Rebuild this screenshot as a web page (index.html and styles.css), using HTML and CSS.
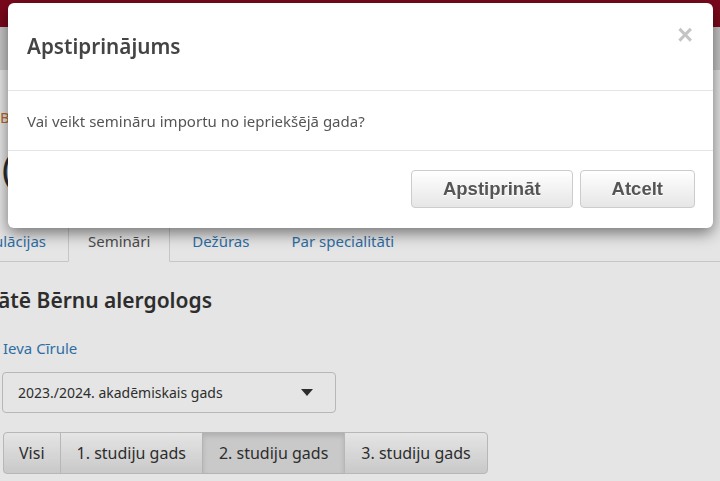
FILE: index.html
```html
<!DOCTYPE html>
<html lang="lv">

<head>
	<meta charset="utf-8">
	<meta name="viewport" content="width=device-width, initial-scale=1">
	<title>Semināri</title>
	<link rel="stylesheet" href="styles.css">
</head>

<body>
	<div class="topbar"></div>
	<div class="navbar"></div>

	<div class="content">
		<div class="breadcrumb">Bērnu alergologs / Semināri</div>
		<h1 class="page-title">(BA) Bērnu alergologs</h1>

		<ul class="tabs">
			<li class="tab tab-cut"><a href="#">Manipulācijas</a></li>
			<li class="tab active"><a href="#">Semināri</a></li>
			<li class="tab"><a href="#">Dežūras</a></li>
			<li class="tab"><a href="#">Par specialitāti</a></li>
		</ul>

		<h2 class="section-title">Rezidentūra specialitātē Bērnu alergologs</h2>

		<div class="form">
			<a class="person" href="#">Ieva Cīrule</a>
			<div class="select">
				<span>2023./2024. akadēmiskais gads</span>
				<span class="caret"></span>
			</div>
			<div class="btn-group">
				<button class="btn">Visi</button>
				<button class="btn">1. studiju gads</button>
				<button class="btn active">2. studiju gads</button>
				<button class="btn">3. studiju gads</button>
			</div>
		</div>
	</div>

	<div class="backdrop"></div>

	<div class="modal">
		<div class="modal-header">
			<h3 class="modal-title">Apstiprinājums</h3>
			<button class="close">×</button>
		</div>
		<div class="modal-body">Vai veikt semināru importu no iepriekšējā gada?</div>
		<div class="modal-footer">
			<button class="dlg-btn">Apstiprināt</button>
			<button class="dlg-btn">Atcelt</button>
		</div>
	</div>
</body>

</html>
```

FILE: styles.css
```css
body {
	background-color: #FFFFFF;
	color: #333333;
	font-family: "Noto Sans", sans-serif;
	font-size: 15px;
	margin: 0;
	overflow: hidden;
}

.topbar {
	background-color: #880B20;
	height: 27px;
}

.navbar {
	background-color: #DDDDDD;
	height: 43px;
}

.content {
	padding: 0 0 0 2px;
}

.breadcrumb {
	color: #D2702F;
	line-height: 20px;
	margin: 37px 0 0 -2px;
}

.page-title {
	font-size: 36px;
	font-weight: 400;
	line-height: 44px;
	margin: 20px 0 0 0;
}

.tabs {
	border-bottom: 1px solid #DDDDDD;
	display: flex;
	list-style: none;
	margin: 29px 0 0 -2px;
	padding: 0;
}

.tab {
	margin-right: 2px;
}

.tab a {
	border: 1px solid transparent;
	border-radius: 4px 4px 0 0;
	color: #337AB7;
	display: block;
	line-height: 20px;
	margin-bottom: -1px;
	padding: 10px 19px;
	text-decoration: none;
	white-space: nowrap;
}

.tab-cut {
	display: flex;
	justify-content: flex-end;
	overflow: hidden;
	width: 66px;
}

.tab.active a {
	background-color: #FFFFFF;
	border-color: #DDDDDD #DDDDDD transparent;
	color: #555555;
}

.section-title {
	display: flex;
	font-size: 21px;
	font-weight: 600;
	justify-content: flex-end;
	line-height: 28px;
	margin: 24px 0 0 -2px;
	overflow: hidden;
	white-space: nowrap;
	width: 212px;
}

.form {
	display: flex;
	flex-direction: column;
	align-items: flex-start;
}

.person {
	color: #337AB7;
	line-height: 20px;
	margin: 24px 0 0 1px;
	text-decoration: none;
}

.select {
	align-items: center;
	border: 1px solid #CCCCCC;
	border-radius: 4px;
	box-sizing: border-box;
	display: flex;
	font-size: 14px;
	height: 41px;
	justify-content: space-between;
	margin-top: 14px;
	padding: 0 22px 0 15px;
	width: 334px;
}

.caret {
	border-left: 6px solid transparent;
	border-right: 6px solid transparent;
	border-top: 7px solid #333333;
	height: 0;
	width: 0;
}

.btn-group {
	display: flex;
	margin: 19px 0 0 1px;
}

.btn {
	background: linear-gradient(#FFFFFF, #E0E0E0);
	border: 1px solid #CCCCCC;
	color: #333333;
	font-family: "Noto Sans", sans-serif;
	font-size: 16px;
	height: 42px;
	margin-left: -1px;
	padding: 0 16px;
}

.btn:first-child {
	border-radius: 4px 0 0 4px;
	margin-left: 0;
	padding: 0 15px;
}

.btn:last-child {
	border-radius: 0 4px 4px 0;
}

.btn.active {
	background: #E0E0E0;
	border-color: #C8C8C8;
	box-shadow: inset 0 3px 5px rgba(0, 0, 0, 0.125);
}

.backdrop {
	background-color: rgba(0, 0, 0, 0.1);
	inset: 0;
	position: fixed;
}

.modal {
	background-color: #FFFFFF;
	border-radius: 6px;
	box-shadow: 0 5px 15px rgba(0, 0, 0, 0.5);
	left: 8px;
	position: absolute;
	top: 3px;
	width: 705px;
}

.modal-header {
	align-items: center;
	border-bottom: 1px solid #E5E5E5;
	box-sizing: border-box;
	display: flex;
	height: 88px;
	justify-content: space-between;
	padding: 0 20px 0 19px;
}

.modal-title {
	color: #444444;
	font-size: 20.7px;
	font-weight: 600;
	margin: 0 0 2px 0;
}

.close {
	align-self: flex-start;
	background: none;
	border: 0;
	color: #C4C4C4;
	font-family: "Liberation Sans", sans-serif;
	font-size: 27px;
	font-weight: 700;
	line-height: 20px;
	margin-top: 22px;
	padding: 0;
}

.modal-body {
	border-bottom: 1px solid #E5E5E5;
	color: #555555;
	line-height: 20px;
	padding: 20px 19px 19px;
}

.modal-footer {
	display: flex;
	gap: 7px;
	justify-content: flex-end;
	padding: 19px 18px 20px;
}

.dlg-btn {
	background: linear-gradient(#FFFFFF, #E6E6E6);
	border: 1px solid #CCCCCC;
	border-radius: 4px;
	color: #555555;
	font-family: "Liberation Sans", sans-serif;
	font-size: 18.5px;
	font-weight: 700;
	height: 38px;
	padding: 0 31px;
	text-shadow: 0 1px 0 #FFFFFF;
}
```
